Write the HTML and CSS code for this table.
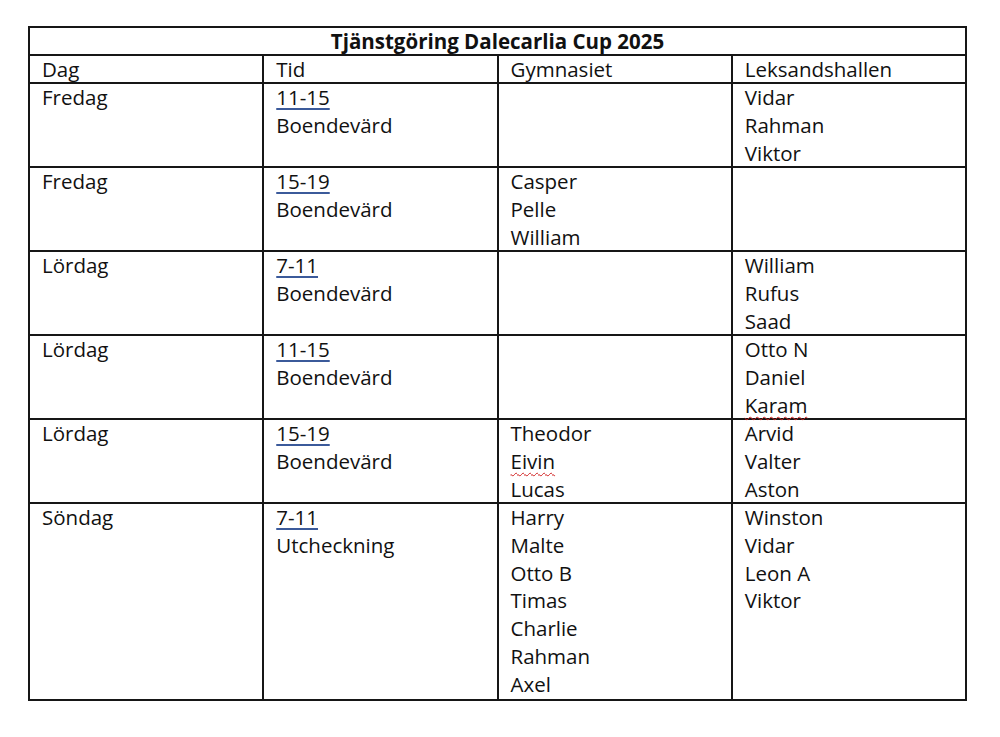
FILE: index.html
```html
<!DOCTYPE html>
<html lang="sv">
<head>
<meta charset="utf-8">
<title>Tjänstgöring Dalecarlia Cup 2025</title>
<link rel="stylesheet" href="styles.css">
</head>
<body>
<table class="schedule">
  <colgroup>
    <col class="c"><col class="c"><col class="c"><col class="c">
  </colgroup>
  <tr class="title-row"><th colspan="4">Tjänstgöring Dalecarlia Cup 2025</th></tr>
  <tr class="head-row"><td>Dag</td><td>Tid</td><td>Gymnasiet</td><td>Leksandshallen</td></tr>
  <tr class="row">
    <td><div class="cell">Fredag</div></td>
    <td><div class="cell"><span class="time">11-15</span><br>Boendevärd</div></td>
    <td><div class="cell"></div></td>
    <td><div class="cell">Vidar<br>Rahman<br>Viktor</div></td>
  </tr>
  <tr class="row">
    <td><div class="cell">Fredag</div></td>
    <td><div class="cell"><span class="time">15-19</span><br>Boendevärd</div></td>
    <td><div class="cell">Casper<br>Pelle<br>William</div></td>
    <td><div class="cell"></div></td>
  </tr>
  <tr class="row">
    <td><div class="cell">Lördag</div></td>
    <td><div class="cell"><span class="time">7-11</span><br>Boendevärd</div></td>
    <td><div class="cell"></div></td>
    <td><div class="cell">William<br>Rufus<br>Saad</div></td>
  </tr>
  <tr class="row">
    <td><div class="cell">Lördag</div></td>
    <td><div class="cell"><span class="time">11-15</span><br>Boendevärd</div></td>
    <td><div class="cell"></div></td>
    <td><div class="cell">Otto N<br>Daniel<br><span class="spell">Karam</span></div></td>
  </tr>
  <tr class="row">
    <td><div class="cell">Lördag</div></td>
    <td><div class="cell"><span class="time">15-19</span><br>Boendevärd</div></td>
    <td><div class="cell">Theodor<br><span class="spell">Eivin</span><br>Lucas</div></td>
    <td><div class="cell">Arvid<br>Valter<br>Aston</div></td>
  </tr>
  <tr class="row last">
    <td><div class="cell">Söndag</div></td>
    <td><div class="cell"><span class="time">7-11</span><br>Utcheckning</div></td>
    <td><div class="cell">Harry<br>Malte<br>Otto B<br>Timas<br>Charlie<br>Rahman<br>Axel</div></td>
    <td><div class="cell">Winston<br>Vidar<br>Leon A<br>Viktor</div></td>
  </tr>
</table>
</body>
</html>
```
FILE: styles.css
```css
html, body {
  margin: 0;
  padding: 0;
  background: #ffffff;
}
body {
  padding: 26px 0 0 28px;
  font-family: "Open Sans", "Liberation Sans", Arial, sans-serif;
  color: #111;
}
.schedule {
  border-collapse: collapse;
  table-layout: fixed;
  width: 939px;
  font-size: 20.5px;
  line-height: 27.8px;
}
.schedule .c { width: 25%; }
.schedule th,
.schedule td {
  border: 2px solid #161616;
  padding: 0 12px;
  text-align: left;
  vertical-align: top;
}
.title-row th {
  text-align: center;
  font-weight: bold;
  height: 26px;
  line-height: 26px;
  padding: 0;
}
.head-row td {
  height: 26px;
  line-height: 26px;
}
.cell {
  height: 82px;
  overflow: visible;
}
.row.last .cell { height: 195px; }
.time {
  text-decoration: underline #3b5a9a;
  text-underline-offset: 3px;
  text-decoration-thickness: 2px;
}
.spell {
  text-decoration: underline wavy #d02020;
  text-decoration-thickness: 1px;
  text-underline-offset: 3px;
}
```
